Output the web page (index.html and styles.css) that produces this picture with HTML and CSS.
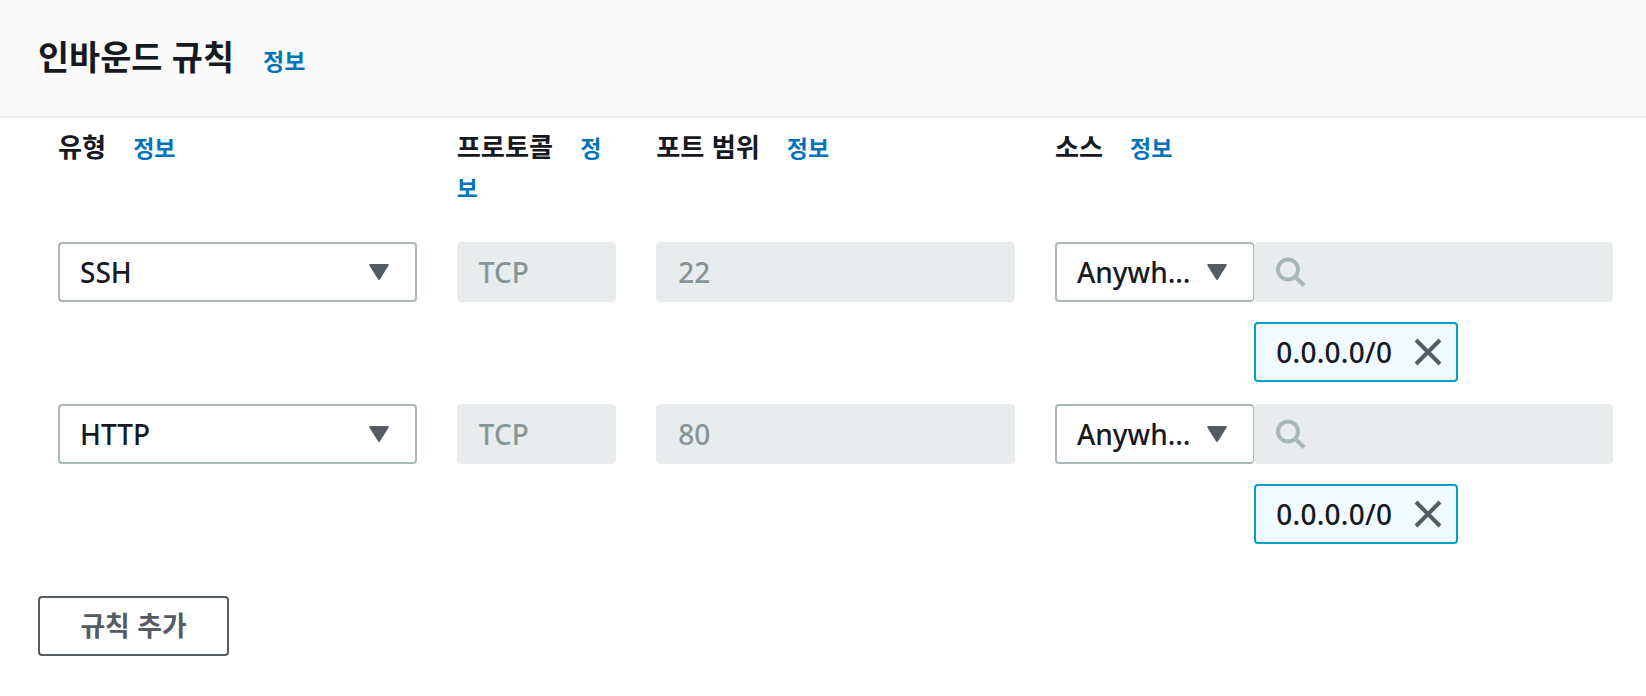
FILE: index.html
```html
<!DOCTYPE html>
<html lang="ko">
<head>
<meta charset="utf-8">
<title>인바운드 규칙</title>
<link rel="stylesheet" href="styles.css">
</head>
<body>
<section class="panel">
  <header class="panel-header">
    <h2 class="title">인바운드 규칙</h2><a class="info">정보</a>
  </header>
  <div class="rules">
    <div class="grid labels">
      <div class="label wide">유형<a class="info">정보</a></div>
      <div class="label">프로토콜<a class="info">정보</a></div>
      <div class="label wide">포트 범위<a class="info">정보</a></div>
      <div class="label source">소스<a class="info">정보</a></div>
    </div>
    <div class="grid rule">
      <div class="field select wide"><span>SSH</span><svg class="caret" viewBox="0 0 20 16"><path d="M1.2 1h17.6L10 15z"/></svg></div>
      <div class="field disabled"><span>TCP</span></div>
      <div class="field disabled wide"><span>22</span></div>
      <div class="source source-fields">
        <div class="field select"><span>Anywh…</span><svg class="caret" viewBox="0 0 20 16"><path d="M1.2 1h17.6L10 15z"/></svg></div>
        <div class="search-column">
          <div class="field disabled"><svg class="search" viewBox="0 0 30 30"><circle cx="12" cy="12.5" r="10"/><path d="M19 19.5l9 9"/></svg></div>
          <div class="field token"><span>0.0.0.0/0</span><svg class="close" viewBox="0 0 28 28"><path d="M2 2l24 24M26 2L2 26"/></svg></div>
        </div>
      </div>
    </div>
    <div class="grid rule">
      <div class="field select wide"><span>HTTP</span><svg class="caret" viewBox="0 0 20 16"><path d="M1.2 1h17.6L10 15z"/></svg></div>
      <div class="field disabled"><span>TCP</span></div>
      <div class="field disabled wide"><span>80</span></div>
      <div class="source source-fields">
        <div class="field select"><span>Anywh…</span><svg class="caret" viewBox="0 0 20 16"><path d="M1.2 1h17.6L10 15z"/></svg></div>
        <div class="search-column">
          <div class="field disabled"><svg class="search" viewBox="0 0 30 30"><circle cx="12" cy="12.5" r="10"/><path d="M19 19.5l9 9"/></svg></div>
          <div class="field token"><span>0.0.0.0/0</span><svg class="close" viewBox="0 0 28 28"><path d="M2 2l24 24M26 2L2 26"/></svg></div>
        </div>
      </div>
    </div>
  </div>
  <button class="add">규칙 추가</button>
</section>
</body>
</html>
```
FILE: styles.css
```css
* { box-sizing: border-box; }
body {
  margin: 0;
  background: #fff;
  color: #16191f;
  font-family: "Noto Sans", "Noto Sans CJK KR", sans-serif;
  font-size: 28px;
  font-weight: 500;
}
.panel-header {
  display: flex;
  align-items: baseline;
  height: 118px;
  padding: 31px 38px 0;
  background: #fafafa;
  border-bottom: 2px solid #eaeded;
}
.title {
  margin: 0;
  font: 700 33.8px/50px "Noto Sans CJK KR", sans-serif;
}
.info {
  margin-left: 29px;
  color: #0073bb;
  font: 700 23px/30px "Noto Sans CJK KR", sans-serif;
}
.rules { padding: 0 33px 0 58px; }
.grid {
  display: grid;
  grid-template-columns: repeat(8, minmax(0, 1fr));
  column-gap: 40px;
}
.wide { grid-column: span 2; }
.source { grid-column: span 3; }
.labels { height: 124px; padding-top: 8px; }
.label {
  font: 700 26.2px/40px "Noto Sans CJK KR", sans-serif;
}
.label .info { margin-left: 27px; }
.rule { height: 162px; align-items: start; }
.field {
  display: flex;
  align-items: center;
  justify-content: space-between;
  height: 60px;
  padding: 0 22px;
  border-radius: 4px;
  line-height: 38px;
}
.field span { padding-bottom: 1px; }
.select {
  padding: 0 26px 0 20px;
  border: 2px solid #aab7b8;
  background: #fff;
}
.disabled { background: #e9ecec; color: #879596; }
.disabled span { padding-bottom: 0; }
.source-fields { display: flex; }
.source-fields .select {
  width: 199.4px;
  flex: none;
  padding-right: 26px;
  border-right-width: 1px;
}
.search-column { flex: 1; }
.caret {
  width: 20px;
  height: 16px;
  fill: #545b64;
  stroke: #545b64;
  stroke-width: 2;
  stroke-linejoin: round;
}
.search { width: 30px; height: 30px; fill: none; stroke: #aab7b8; stroke-width: 4; }
.token {
  width: 204px;
  margin-top: 20px;
  padding: 0 14px 0 20px;
  border: 2px solid #00a1c9;
  background: #f1faff;
  letter-spacing: 0.25px;
}
.close { width: 28px; height: 28px; fill: none; stroke: #545b64; stroke-width: 4; }
.add {
  display: block;
  width: 191px;
  height: 60px;
  margin: 30px 0 0 38px;
  padding: 0 0 2px;
  border: 2px solid #545b64;
  border-radius: 4px;
  background: #fff;
  color: #545b64;
  font: 700 26.8px/38px "Noto Sans CJK KR", sans-serif;
}
```
